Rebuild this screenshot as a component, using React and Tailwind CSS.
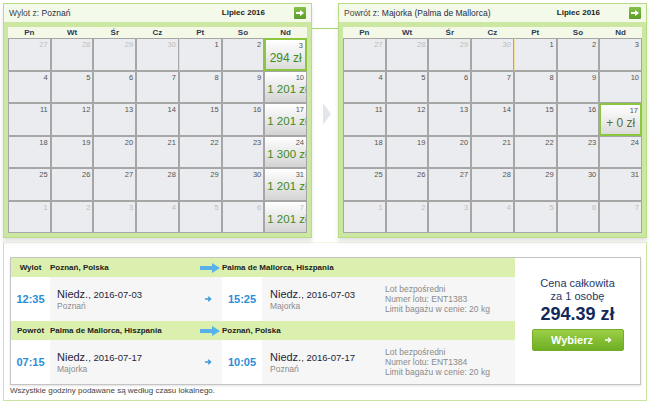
import React from 'react';

const dayNames = ['Pn', 'Wt', 'Śr', 'Cz', 'Pt', 'So', 'Nd'];

// builds the July 2016 grid, extras keyed by "row-col"
const buildWeeks = (extras) => {
  const weeks = [
    [27, 28, 29, 30, 1, 2, 3],
    [4, 5, 6, 7, 8, 9, 10],
    [11, 12, 13, 14, 15, 16, 17],
    [18, 19, 20, 21, 22, 23, 24],
    [25, 26, 27, 28, 29, 30, 31],
    [1, 2, 3, 4, 5, 6, 7],
  ];
  return weeks.map((week, r) =>
    week.map((n, c) => ({
      n,
      out: (r === 0 && c < 4) || r === 5,
      marker: r === 0 && c === 4,
      ...(extras[`${r}-${c}`] || {}),
    }))
  );
};

const outboundWeeks = buildWeeks({
  '0-6': { price: '294 zł', selected: true },
  '1-6': { price: '1 201 zł' },
  '2-6': { price: '1 201 zł' },
  '3-6': { price: '1 300 zł' },
  '4-6': { price: '1 201 zł' },
  '5-6': { price: '1 201 zł' },
});

const returnWeeks = buildWeeks({
  '2-6': { price: '+ 0 zł', selected: true, neutral: true },
});

const NextButton = () => (
  <div className="w-[12px] h-[12px] rounded-[1px] bg-linear-to-b from-[#86c24a] to-[#5c9b27] flex items-center justify-center">
    <svg width="8" height="6" viewBox="0 0 8 6">
      <path d="M0 2h4V0l4 3-4 3V4H0z" fill="#fff" />
    </svg>
  </div>
);

const DayCell = ({ day }) => {
  const { n, out, marker, price, selected, neutral } = day;

  let box = 'border border-[#a6a6a6] bg-[#eaecef]';
  if (price && !selected) box = 'border border-[#a6a6a6] bg-linear-to-b from-white to-[#d4d4d4]';
  if (selected) box = 'border-2 border-[#8cc63f] bg-linear-to-b from-white to-[#dcdcdc]';

  return (
    <div className={`h-[32.5px] overflow-hidden flex flex-col ${box} ${marker ? 'border-l-[#eee0a0]' : ''}`}>
      <div className={`text-right text-[7.5px] leading-[9px] pt-[1px] pr-[2px] ${out ? 'text-[#bdbdbd]' : 'text-[#555]'}`}>
        {n}
      </div>
      {price && (
        <div
          className={`whitespace-nowrap leading-[14px] ${
            selected ? 'text-center text-[12px] mt-[1px]' : 'pl-[2px] text-[11.5px]'
          } ${neutral ? 'text-[#5c6f3c]' : 'text-[#3f8a1c]'}`}
        >
          {price}
        </div>
      )}
    </div>
  );
};

const CalendarPanel = ({ label, city, weeks }) => (
  <div className="w-[309px] border border-[#b9db86] bg-[#cbe7a1] shadow-[0_4px_4px_rgba(0,0,0,0.10)]">
    <div className="h-[18px] bg-[#f4faea] flex items-center pl-[5px] pr-[5px] text-[8.5px]">
      <span className="text-[#444]">{label}&nbsp;</span>
      <span className="text-[#1e2b48]">{city}</span>
      <span className="ml-auto font-bold text-[8px] text-[#1a1a1a] mr-[29px]">Lipiec 2016</span>
      <NextButton />
    </div>
    <div className="px-[4px] pt-[5px] pb-[4px]">
      <div className="grid grid-cols-7 h-[11px] bg-[#f3f9e6]">
        {dayNames.map((d) => (
          <div key={d} className="text-center text-[8px] font-bold leading-[11px] text-[#2c3a55]">
            {d}
          </div>
        ))}
      </div>
      <div className="grid grid-cols-7">
        {weeks.flat().map((day, i) => (
          <DayCell key={i} day={day} />
        ))}
      </div>
    </div>
  </div>
);

const BigArrow = () => (
  <svg width="20" height="10" viewBox="0 0 20 10">
    <path d="M0 3h12V0l8 5-8 5V7H0z" fill="#56b2e9" />
  </svg>
);

const SmallArrow = ({ color = '#3a9be0' }) => (
  <svg width="7" height="6" viewBox="0 0 7 6">
    <path d="M0 3h5.2M3.2 0.8 5.6 3 3.2 5.2" stroke={color} strokeWidth="1.4" fill="none" />
  </svg>
);

const LegHeader = ({ label, from, to }) => (
  <div className="h-[19px] bg-[#dbf0ae] flex items-center text-[8px] font-bold text-[#222]">
    <div className="w-[39px] text-center">{label}</div>
    <div className="w-[172px] flex items-center justify-between pr-[2px]">
      <span>{from}</span>
      <BigArrow />
    </div>
    <div>{to}</div>
  </div>
);

const DateBlock = ({ date, city }) => (
  <div>
    <div className="leading-[12px] text-[#1e1e3a]">
      <span className="text-[11px]">Niedz.</span>
      <span className="text-[9.5px]">, {date}</span>
    </div>
    <div className="text-[8.5px] leading-[10px] text-[#8c8c8c]">{city}</div>
  </div>
);

const LegBody = ({ dep, arr, depDate, arrDate, depCity, arrCity, flight }) => (
  <div className="h-[44px] flex">
    <div className="w-[39px] flex items-center justify-center text-[11px] font-bold text-[#2a8ed8]">{dep}</div>
    <div className="w-[172px] bg-[#f6f6f6] flex items-center pl-[7px] pr-[10px]">
      <DateBlock date={depDate} city={depCity} />
      <div className="ml-auto">
        <SmallArrow />
      </div>
    </div>
    <div className="w-[40px] flex items-center justify-center text-[11px] font-bold text-[#2a8ed8]">{arr}</div>
    <div className="flex-1 bg-[#f6f6f6] flex items-center">
      <div className="w-[123px] pl-[8px]">
        <DateBlock date={arrDate} city={arrCity} />
      </div>
      <div className="text-[8.5px] leading-[10px] text-[#8a8a8a]">
        <div>Lot bezpośredni</div>
        <div>Numer lotu: {flight}</div>
        <div>Limit bagażu w cenie: 20 kg</div>
      </div>
    </div>
  </div>
);

export default function App() {
  return (
    <div className="w-[650px] h-[408px] bg-white px-[3px] pt-[3px] overflow-hidden font-['Liberation_Sans',Arial,sans-serif]">
      {/* Calendars */}
      <div className="flex">
        <CalendarPanel label="Wylot z:" city="Poznań" weeks={outboundWeeks} />
        <div className="w-[26px] flex flex-col">
          <div className="h-px bg-[#a6d470] mt-[25px]" />
          <div className="mt-[74px] ml-[11px]">
            <svg width="8" height="22" viewBox="0 0 8 22">
              <path d="M0 0l8 11-8 11z" fill="#e3e6ea" />
            </svg>
          </div>
        </div>
        <CalendarPanel label="Powrót z:" city="Majorka (Palma de Mallorca)" weeks={returnWeeks} />
      </div>

      {/* Summary */}
      <div className="mt-[4px] border border-[#c9e6a0] border-t-[#eef7e2] bg-white pl-[6px] pr-[5px] pt-[14px] pb-[4px]">
        <div className="flex border border-[#c4c4c4] shadow-[0_1px_2px_rgba(0,0,0,0.12)]">
          <div className="w-[504px]">
            <LegHeader label="Wylot" from="Poznań, Polska" to="Palma de Mallorca, Hiszpania" />
            <LegBody
              dep="12:35"
              arr="15:25"
              depDate="2016-07-03"
              arrDate="2016-07-03"
              depCity="Poznań"
              arrCity="Majorka"
              flight="ENT1383"
            />
            <LegHeader label="Powrót" from="Palma de Mallorca, Hiszpania" to="Poznań, Polska" />
            <LegBody
              dep="07:15"
              arr="10:05"
              depDate="2016-07-17"
              arrDate="2016-07-17"
              depCity="Majorka"
              arrCity="Poznań"
              flight="ENT1384"
            />
          </div>
          <div className="flex-1 flex flex-col items-center pt-[19px]">
            <div className="text-[11px] leading-[13px] text-[#1d3a6b] text-center">
              Cena całkowita
              <br />
              za 1 osobę
            </div>
            <div className="text-[18px] leading-[20px] font-bold text-[#13295a] mt-[1px]">294.39 zł</div>
            <button className="mt-[5px] w-[92px] h-[22px] rounded-[2px] border border-[#76ab2c] bg-linear-to-b from-[#9bcf45] to-[#6eae22] flex items-center justify-center gap-[12px] pl-[8px] text-[11px] font-bold text-white">
              Wybierz
              <SmallArrow color="#ffffff" />
            </button>
          </div>
        </div>
        <p className="mt-[1px] text-[8px] leading-[10px] text-[#444]">
          Wszystkie godziny podawane są według czasu lokalnego.
        </p>
      </div>
    </div>
  );
}
